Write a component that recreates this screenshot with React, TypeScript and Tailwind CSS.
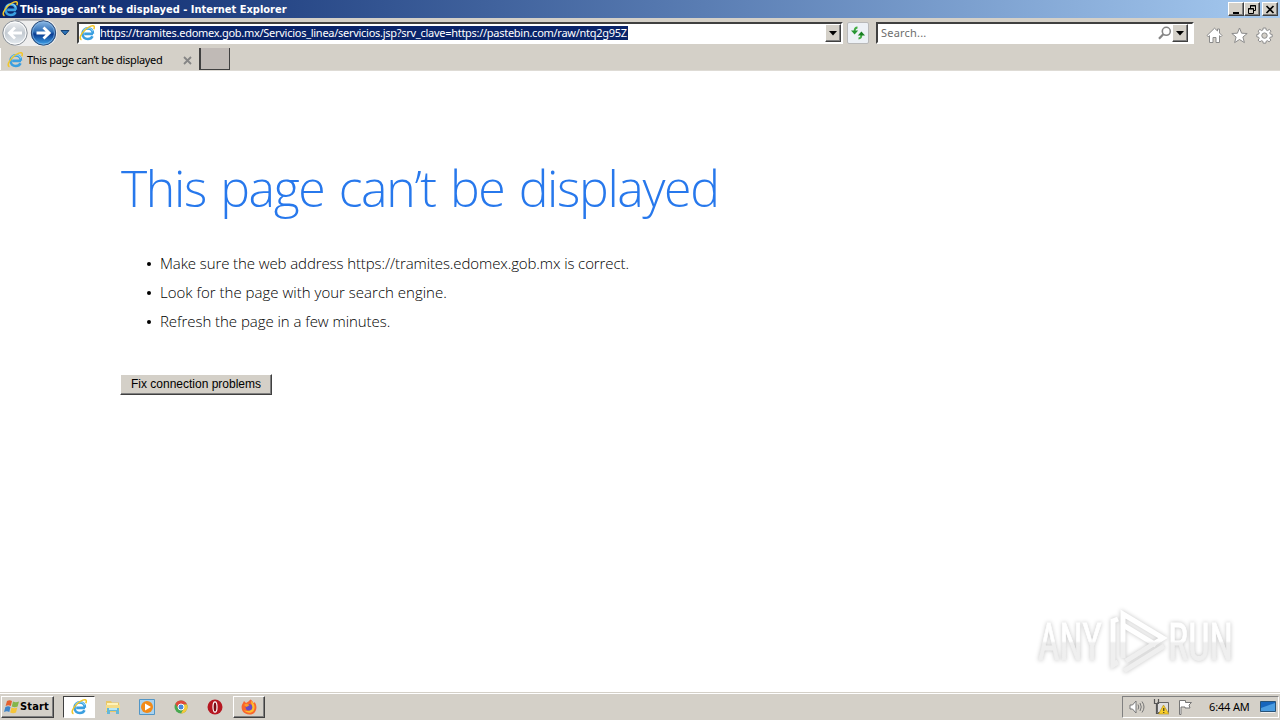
import React from 'react';
import clsx from 'clsx';

const raised =
  'border border-t-white border-l-white border-r-[#404040] border-b-[#404040] shadow-[inset_-1px_-1px_0_#808080] bg-[#d4d0c8]';

const tips = [
  { text: 'Make sure the web address https://tramites.edomex.gob.mx is correct.', spacing: 'tracking-[-0.1px]' },
  { text: 'Look for the page with your search engine.', spacing: 'tracking-[0.01px]' },
  { text: 'Refresh the page in a few minutes.', spacing: 'tracking-[-0.05px]' },
];

function IeIcon({ className }: { className?: string }) {
  return (
    <svg viewBox="0 0 16 16" className={clsx('shrink-0', className)} fill="none">
      <path d="M14 8.9H5.2M13.9 8.8C13.8 5.4 11.8 3.4 8.8 3.4C5.8 3.4 3.5 5.6 3.5 8.7C3.5 11.9 5.7 14 8.8 14C11.1 14 12.7 13 13.5 11.2" stroke="#3a9fe0" strokeWidth="2.6" />
      <path d="M4.2 5.6C5.4 3.7 7 3 9 3C11.4 3 13 4.3 13.7 6.3" stroke="#8ed4f7" strokeWidth="1.1" />
      <path d="M2.5 14.8C-.4 13.6 2 8.6 6.2 4.8C10 1.3 14.3-.3 15.2 1.5C15.5 2.3 15.2 3.3 14.8 4.2" stroke="#f2c629" strokeWidth="1.5" />
    </svg>
  );
}

function NavButtons() {
  return (
    <svg viewBox="0 0 60 30" className="h-[30px] w-[60px] shrink-0">
      <defs>
        <linearGradient id="backFill" x1="0" y1="0" x2="0" y2="1">
          <stop offset="0" stopColor="#f1f3f5" />
          <stop offset=".5" stopColor="#c3cad1" />
          <stop offset="1" stopColor="#e7edf2" />
        </linearGradient>
        <linearGradient id="forwardFill" x1="0" y1="0" x2="0" y2="1">
          <stop offset="0" stopColor="#8db9e5" />
          <stop offset=".45" stopColor="#2c6cb5" />
          <stop offset=".55" stopColor="#093b91" />
          <stop offset="1" stopColor="#42a8ed" />
        </linearGradient>
      </defs>
      <path d="M14 2H45C52 2 57 8 57 15S52 28 44 28H14Z" fill="#eeeeee" />
      <path d="M15 2H44" stroke="#8d8d8d" />
      <circle cx="15" cy="15" r="12.2" fill="url(#backFill)" stroke="#8b9198" />
      <circle cx="15" cy="15" r="11" fill="none" stroke="#fff" />
      <path d="M22 15H9.5M15 9.5L9.3 15L15 20.5" fill="none" stroke="#fff" strokeWidth="2.8" />
      <circle cx="43.5" cy="15" r="12.2" fill="url(#forwardFill)" stroke="#2d4a75" />
      <circle cx="43.5" cy="15" r="11" fill="none" stroke="#8cbbe8" strokeWidth=".7" />
      <path d="M36.5 15H49M43.5 9.5L49.2 15L43.5 20.5" fill="none" stroke="#fff" strokeWidth="2.8" />
    </svg>
  );
}

function DropButton({ className }: { className?: string }) {
  return (
    <button className={clsx('flex h-[18px] w-4 shrink-0 items-center justify-center', raised, className)}>
      <svg viewBox="0 0 8 5" className="h-[5px] w-2">
        <path d="M0 0H8L4 4.5Z" fill="#000" />
      </svg>
    </button>
  );
}

function TitleBar() {
  const button = clsx('flex h-[14px] w-4 items-center justify-center', raised);
  return (
    <div className="flex h-[18px] items-center bg-linear-to-r from-[#0a246a] to-[#a6caf0] pl-[2px] pr-[2px]">
      <IeIcon className="h-4 w-4" />
      <span className="ml-[2px] flex-1 whitespace-nowrap pt-[2px] font-['DejaVu_Sans_Condensed','DejaVu_Sans',sans-serif] text-[11px] font-bold leading-4 text-white [font-stretch:condensed]">
        This page can’t be displayed - Internet Explorer
      </span>
      <div className="flex">
        <button className={button}>
          <svg viewBox="0 0 10 9" className="h-[9px] w-[10px]"><path d="M2 7H8V9H2Z" /></svg>
        </button>
        <button className={button}>
          <svg viewBox="0 0 10 9" className="h-[9px] w-[10px]" fill="none" stroke="#000">
            <path d="M3.5 3V.5H8.5V5.5H7M3 1H9M1.5 3.5H6.5V8.5H1.5ZM1 4H7" />
          </svg>
        </button>
        <button className={clsx('ml-[2px]', button)}>
          <svg viewBox="0 0 10 9" className="h-[9px] w-[10px]"><path d="M1.5 1L8.5 8M8.5 1L1.5 8" stroke="#000" strokeWidth="1.7" /></svg>
        </button>
      </div>
    </div>
  );
}

function AddressRow() {
  const field =
    'flex h-[22px] items-center border-2 border-t-[#404040] border-l-[#404040] border-r-white border-b-white bg-white';
  return (
    <div className="flex h-[30px] items-center">
      <NavButtons />
      <svg viewBox="0 0 10 6" className="h-[6px] w-[10px] shrink-0">
        <path d="M1 .5H9L5 5Z" fill="#2c73b8" stroke="#153f70" />
      </svg>
      <div className={clsx('ml-[7px] w-[766px] shrink-0', field)}>
        <IeIcon className="h-4 w-4" />
        <span className="ml-[5px] h-[14px] w-[528px] whitespace-nowrap bg-[#0a246a] text-[11px] leading-[13px] tracking-[-0.275px] text-white">
          https://tramites.edomex.gob.mx/Servicios_linea/servicios.jsp?srv_clave=https://pastebin.com/raw/ntq2g95Z
        </span>
        <DropButton className="ml-auto" />
      </div>
      <button className="ml-[4px] flex h-[22px] w-[22px] shrink-0 items-center justify-center rounded-[2px] border border-[#b9b9b9] bg-[#edf1f6]">
        <svg viewBox="0 0 14 14" className="h-[14px] w-[14px]" fill="none">
          <path d="M6.5 1.5C4.5 1.5 3.6 2.6 3.6 5" stroke="#42ad42" strokeWidth="1.8" />
          <path d="M0 4.5H7.2L3.6 8.5Z" fill="#279633" />
          <path d="M7.5 12.5C9.5 12.5 10.4 11.4 10.4 9" stroke="#42ad42" strokeWidth="1.8" />
          <path d="M6.8 9.5H14L10.4 5.5Z" fill="#188022" />
        </svg>
      </button>
      <div className={clsx('ml-[7px] w-[318px] shrink-0', field)}>
        <span className="ml-[3px] mt-[1px] flex-1 text-[11px] tracking-[0.2px] text-[#6d6d6d]">Search...</span>
        <svg viewBox="0 0 14 14" className="h-[14px] w-[14px]" fill="none" stroke="#858585">
          <circle cx="8.3" cy="5.3" r="4" strokeWidth="1.6" />
          <path d="M5.3 8.3L1 12.8" strokeWidth="2.2" />
        </svg>
        <DropButton className="mr-[4px]" />
      </div>
      <div className="ml-[12px] mt-[4px] flex gap-2">
        <svg viewBox="0 0 17 17" className="h-[17px] w-[17px]" fill="#fff" stroke="#8b8b8b">
          <path d="M8.5 1.2L1 8.5L2.2 9.8L3.5 8.7V15.5H7V10.5H10V15.5H13.5V8.7L14.8 9.8L16 8.5L13.5 6V2H11.5V4Z" />
        </svg>
        <svg viewBox="0 0 17 17" className="h-[17px] w-[17px]" fill="#fff" stroke="#8b8b8b">
          <path d="M8.5 1L10.6 6.2L16.2 6.5L11.9 10L13.4 15.6L8.5 12.5L3.6 15.6L5.1 10L.8 6.5L6.4 6.2Z" />
        </svg>
        <svg viewBox="0 0 17 17" className="h-[17px] w-[17px]" fill="#fff" stroke="#8b8b8b">
          <path d="M7.2 1H9.8L10.2 3L11.6 3.6L13.3 2.4L15 4.1L13.8 5.8L14.3 7.1L16.2 7.5V9.9L14.2 10.2L13.7 11.4L14.9 13.1L13.1 14.8L11.5 13.7L10.2 14.2L9.8 16.2H7.2L6.8 14.2L5.6 13.7L3.9 14.8L2.1 13.1L3.2 11.4L2.7 10.2L.8 9.9V7.5L2.7 7.1L3.2 5.8L2.1 4.1L3.9 2.4L5.6 3.6L6.8 3Z" />
          <circle cx="8.5" cy="8.6" r="2.7" fill="#d4d0c8" />
        </svg>
      </div>
    </div>
  );
}

function TabRow() {
  return (
    <div className="flex h-[23px] border-b border-[#dedbd5]">
      <div className="flex w-[199px] items-center border-l border-white pl-[6px] pr-[7px]">
        <IeIcon className="mt-[1px] h-4 w-4" />
        <span className="ml-[4px] mt-[2px] flex-1 whitespace-nowrap text-[11px] tracking-[-0.33px] text-black">This page can’t be displayed</span>
        <svg viewBox="0 0 9 9" className="mt-[2px] h-[9px] w-[9px]">
          <path d="M1 1L8 8M8 1L1 8" stroke="#858585" strokeWidth="1.8" />
        </svg>
      </div>
      <div className="h-[22px] w-[31px] border-b border-l-2 border-r border-[#404040] bg-[#c0bab6]" />
    </div>
  );
}

function Watermark() {
  return (
    <svg viewBox="0 0 210 70" className="absolute bottom-[16px] right-[38px] h-[70px] w-[210px] overflow-visible drop-shadow-[0_0_2px_#c4c4c4]">
      <defs>
        <linearGradient id="markFill" x1="0" y1="0" x2="0" y2="70" gradientUnits="userSpaceOnUse">
          <stop offset=".5" stopColor="#fff" />
          <stop offset=".53" stopColor="#efefef" />
        </linearGradient>
      </defs>
      <g fill="url(#markFill)" stroke="url(#markFill)" strokeWidth=".8" fontFamily="'Liberation Sans Narrow', 'Roboto Condensed', Roboto, sans-serif" fontSize="51">
        <text x="6" y="54" textLength="64" lengthAdjust="spacingAndGlyphs">ANY</text>
        <text x="136" y="54" textLength="65" lengthAdjust="spacingAndGlyphs">RUN</text>
      </g>
      <g fill="none" stroke="url(#markFill)" strokeWidth="5">
        <path d="M91 52V8L131 32L94 55" />
        <path d="M86 13L81 15V59L86 56" />
        <path d="M91 19L124 39M92 65L132 40" />
      </g>
    </svg>
  );
}

function ErrorPage() {
  return (
    <main className="relative flex-1 bg-white pl-[120px] pt-[83px]">
      <h1 className="whitespace-nowrap pl-[1px] font-['Open_Sans',sans-serif] text-[50px] font-light leading-[68px] tracking-[-1.35px] [word-spacing:2.6px] text-[#2778ec]">
        This page can’t be displayed
      </h1>
      <ul className="mt-[27px] font-['Open_Sans',sans-serif] text-[15px] font-light leading-[29px] text-black">
        {tips.map((tip) => (
          <li key={tip.text} className="flex items-center pl-[27px]">
            <span className="mr-[9px] h-1 w-1 rounded-full bg-black" />
            <span className={clsx('whitespace-nowrap', tip.spacing)}>{tip.text}</span>
          </li>
        ))}
      </ul>
      <button className={clsx("mt-[38px] block h-[21px] w-[152px] whitespace-nowrap pb-[2px] font-['Liberation_Sans',sans-serif] text-[12px] leading-[16px]", raised)}>
        Fix connection problems
      </button>
      <Watermark />
    </main>
  );
}

function Taskbar() {
  return (
    <footer className="flex h-7 items-center border-t border-[#d4d0c8] bg-[#d4d0c8] shadow-[inset_0_1px_0_#fff]">
      <button className={clsx('ml-[1px] mt-[1px] flex h-[22px] w-[53px] items-center pl-[2px]', raised)}>
        <svg viewBox="0 0 16 16" className="h-4 w-4 shrink-0">
          <path d="M3 2C5 .8 6.5 1 8 2L6.8 7C5 6 3.5 6 1.6 7Z" fill="#e4602e" />
          <path d="M9 2.5C11 3.6 13 3.4 15 2.4L13.6 7.5C11.5 8.6 9.7 8.4 7.8 7.4Z" fill="#84b64b" />
          <path d="M1.4 8C3.3 7 5 7 6.5 8L5.3 13C3.7 12 2 12 0 13Z" fill="#3e84c9" />
          <path d="M7.5 8.5C9.5 9.5 11.2 9.6 13.3 8.6L12 13.6C10 14.6 8 14.5 6.2 13.5Z" fill="#f5c53a" />
        </svg>
        <span className="pt-[1px] font-['DejaVu_Sans_Condensed','DejaVu_Sans',sans-serif] text-[11px] font-bold tracking-[0.15px] [font-stretch:condensed]">Start</span>
      </button>
      <div className="ml-[9px] mt-[1px] flex h-[22px] w-8 items-center justify-center border border-t-[#404040] border-l-[#404040] border-r-white border-b-white bg-white">
        <IeIcon className="h-4 w-4" />
      </div>
      <div className="ml-[10px] flex items-center gap-[18px]">
        <svg viewBox="0 0 16 16" className="h-4 w-4">
          <path d="M1 2H6L7 3.5H14V13H1Z" fill="#e9c766" />
          <path d="M2 4H13V7H2Z" fill="#fff3b9" />
          <path d="M1 6H15V12H1Z" fill="#f5dc87" />
          <path d="M2 9H14V15H11V12H5V15H2Z" fill="#65b7d8" />
          <path d="M4 9H12V11H4Z" fill="#b8e8f5" />
        </svg>
        <svg viewBox="0 0 16 16" className="h-4 w-4">
          <path d="M.5.5H15.5V15.5H.5Z" fill="#a9d2ef" stroke="#5296c6" />
          <circle cx="8" cy="8" r="6" fill="#f28a18" />
          <path d="M6 4.5L12 8L6 11.5Z" fill="#fff" />
        </svg>
        <svg viewBox="0 0 16 16" className="h-4 w-4">
          <circle cx="8" cy="8" r="6.5" fill="#48a850" />
          <path d="M2.3 4.8A6.5 6.5 0 0 1 14 5.5H8L5.5 9.5Z" fill="#df493b" />
          <path d="M14 5.5A6.5 6.5 0 0 1 8 14.5L11 9L8 5.5Z" fill="#f6c83a" />
          <circle cx="8" cy="8" r="3" fill="#4688db" stroke="#fff" />
        </svg>
        <svg viewBox="0 0 16 16" className="h-4 w-4">
          <circle cx="8" cy="8" r="7.5" fill="#b61721" />
          <ellipse cx="8" cy="8" rx="2" ry="5.2" fill="#7c0b13" stroke="#fff" strokeWidth="1.2" />
        </svg>
      </div>
      <div className={clsx('ml-[10px] mt-[1px] flex h-[22px] w-8 items-center justify-center', raised)}>
        <svg viewBox="0 0 16 16" className="h-4 w-4">
          <path d="M2 4L3 2L5 4C7 3 8 2 9.5.5C12 2 12 4 13 4L13.5 3C16 6 16 10 14 13C11 17 4 16 1.5 12C0 9 .5 6 2 4Z" fill="#f9662e" />
          <path d="M10 2C13 4 15 8 12.5 12C10 15 5 14 3 11C6 13 11 12 11 8Z" fill="#ffbd2e" />
          <circle cx="8" cy="8.2" r="3.3" fill="#694bc4" />
          <path d="M3 6C5 4 7 5 8.5 6.2L5.5 8Z" fill="#ff9a26" />
        </svg>
      </div>
      <div className="ml-auto mr-[1px] mt-[1px] flex h-[22px] w-[157px] items-center border border-t-[#808080] border-l-[#808080] border-r-white border-b-white pl-[6px]">
        <svg viewBox="0 0 16 16" className="h-4 w-4" fill="none" stroke="#777">
          <path d="M1 6H3.5L7 2V14L3.5 10H1Z" fill="#fff" />
          <path d="M9 5.5Q10.5 8 9 10.5M11 4Q13.5 8 11 12M13 2.5Q17 8 13 13.5" />
        </svg>
        <svg viewBox="0 0 16 16" className="ml-2 h-4 w-4">
          <path d="M4.5 3.5H15.5V13.5H4.5Z" fill="#dedede" stroke="#666" />
          <path d="M1.5 0V4.5H5.5V0M3.5 4V14.5H9" fill="none" stroke="#555" strokeWidth="1.2" />
          <path d="M10.5 6L16 15H5.5Z" fill="#f8ce28" stroke="#ad8b1c" strokeWidth=".6" />
          <path d="M10.8 9V12M10.8 13V14" stroke="#222" />
        </svg>
        <svg viewBox="0 0 16 16" className="ml-2 h-4 w-4" fill="#fff" stroke="#777">
          <path d="M2.5 15.5V1.5H8.5V3.5H14.5L12 6L13 9H8V8H4V15.5Z" />
        </svg>
        <span className="ml-[16px] whitespace-nowrap text-[11px] tracking-[-0.15px]">6:44 AM</span>
        <svg viewBox="0 0 16 14" className="ml-auto mr-[2px] h-[14px] w-4">
          <path d="M.5 1.5H15.5V11.5H.5Z" fill="#1665bd" stroke="#285276" />
          <path d="M1 8L15 3V11H1Z" fill="#4b9ce0" />
          <path d="M1 12H15V13H1Z" fill="#eee" />
        </svg>
      </div>
    </footer>
  );
}

function App() {
  return (
    <div className="flex h-screen flex-col overflow-hidden bg-[#d4d0c8] font-['Noto_Sans',sans-serif]">
      <TitleBar />
      <AddressRow />
      <TabRow />
      <ErrorPage />
      <Taskbar />
    </div>
  );
}

export default App;
